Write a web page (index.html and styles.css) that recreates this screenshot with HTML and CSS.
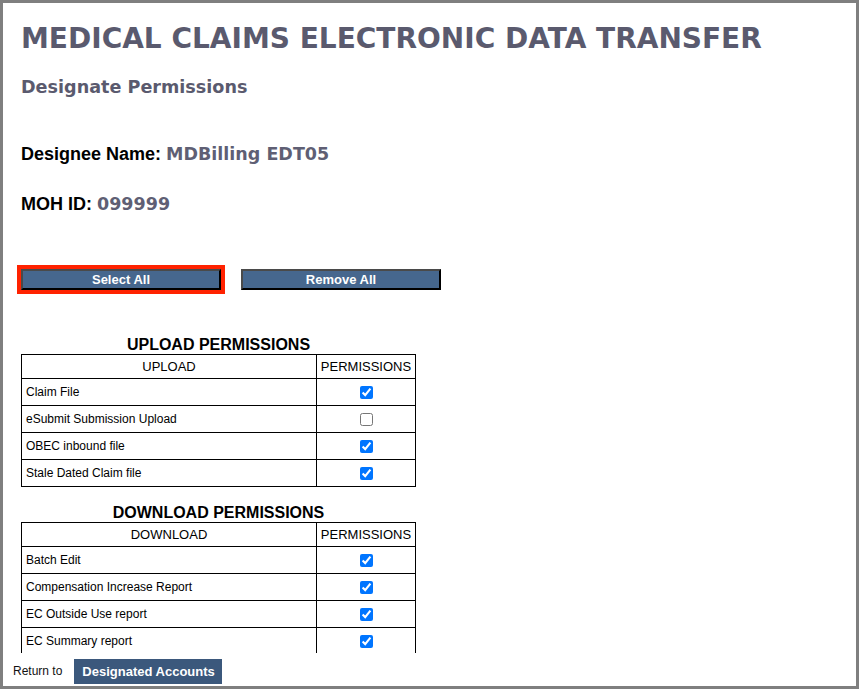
FILE: index.html
```html
<!DOCTYPE html>
<html lang="en">
<head>
    <meta charset="UTF-8">
    <title>Designate Permissions</title>
    <link rel="stylesheet" href="styles.css">
</head>
<body>
    <div class="window">
        <div class="content">
            <h1>MEDICAL CLAIMS ELECTRONIC DATA TRANSFER</h1>
            <h2>Designate Permissions</h2>

            <p class="info">Designee Name: <span class="value">MDBilling EDT05</span></p>
            <p class="info moh">MOH ID: <span class="value">099999</span></p>

            <div class="actions">
                <button class="action-btn focused">Select All</button>
                <button class="action-btn">Remove All</button>
            </div>

            <!-- Upload -->
            <table class="perm-table">
                <caption>UPLOAD PERMISSIONS</caption>
                <tr class="head"><th>UPLOAD</th><th class="perm-col">PERMISSIONS</th></tr>
                <tr><td>Claim File</td><td class="check"><input type="checkbox" checked></td></tr>
                <tr><td>eSubmit Submission Upload</td><td class="check"><input type="checkbox"></td></tr>
                <tr><td>OBEC inbound file</td><td class="check"><input type="checkbox" checked></td></tr>
                <tr><td>Stale Dated Claim file</td><td class="check"><input type="checkbox" checked></td></tr>
            </table>

            <!-- Download -->
            <table class="perm-table download">
                <caption>DOWNLOAD PERMISSIONS</caption>
                <tr class="head"><th>DOWNLOAD</th><th class="perm-col">PERMISSIONS</th></tr>
                <tr><td>Batch Edit</td><td class="check"><input type="checkbox" checked></td></tr>
                <tr><td>Compensation Increase Report</td><td class="check"><input type="checkbox" checked></td></tr>
                <tr><td>EC Outside Use report</td><td class="check"><input type="checkbox" checked></td></tr>
                <tr><td>EC Summary report</td><td class="check"><input type="checkbox" checked></td></tr>
            </table>
        </div>

        <div class="footer">
            <span class="return-label">Return to</span>
            <a class="return-btn" href="#">Designated Accounts</a>
        </div>
    </div>
</body>
</html>
```

FILE: styles.css
```css
/* General Reset */
* {
    margin: 0;
    padding: 0;
    box-sizing: border-box;
}

body {
    font-family: "Liberation Sans", Arial, sans-serif;
    background: #ffffff;
    color: #000;
}

/* Window frame */
.window {
    height: 689px;
    border: 3px solid #7f7f7f;
    display: flex;
    flex-direction: column;
}

.content {
    height: 650px;
    overflow: hidden;
    padding-left: 18px;
}

/* Headings */
h1 {
    font-family: "DejaVu Sans", Verdana, sans-serif;
    font-size: 28px;
    line-height: 34px;
    color: #5a5a6e;
    margin-top: 19px;
    white-space: nowrap;
}

h2 {
    font-family: "DejaVu Sans", Verdana, sans-serif;
    font-size: 17.6px;
    line-height: 22px;
    color: #5a5a6e;
    margin-top: 20px;
}

/* Designee info */
.info {
    font-size: 18px;
    font-weight: bold;
    line-height: 22px;
    margin-top: 45px;
}

.info.moh {
    margin-top: 28px;
}

.value {
    font-family: "DejaVu Sans", Verdana, sans-serif;
    font-size: 17.5px;
    color: #5f5f74;
}

/* Select / Remove buttons */
.actions {
    display: flex;
    gap: 20px;
    margin-top: 54px;
}

.action-btn {
    width: 200px;
    height: 21px;
    background: #46678e;
    color: #fff;
    font-family: "Liberation Sans", Arial, sans-serif;
    font-size: 13px;
    font-weight: bold;
    border: 2px solid;
    border-color: #4a4a4a #000 #000 #4a4a4a;
    cursor: pointer;
}

.action-btn.focused {
    outline: 4px solid #ff2200;
    outline-offset: 0;
}

/* Permission tables */
.perm-table {
    border-collapse: collapse;
    width: 395px;
    margin-top: 45px;
}

.perm-table.download {
    margin-top: 16px;
}

.perm-table caption {
    font-size: 16px;
    font-weight: bold;
    line-height: 19px;
    text-align: center;
}

.perm-table th,
.perm-table td {
    border: 1px solid #000;
}

.perm-table th {
    font-size: 13px;
    font-weight: normal;
    height: 24px;
}

.perm-table .perm-col {
    width: 99px;
}

.perm-table td {
    font-size: 12px;
    height: 27px;
    padding-left: 4px;
}

.perm-table td.check {
    text-align: center;
    padding-left: 0;
}

.check input {
    width: 13px;
    height: 13px;
    vertical-align: middle;
}

/* Footer */
.footer {
    flex: 1;
    display: flex;
    align-items: flex-start;
    padding: 6px 0 0 10px;
    gap: 12px;
}

.return-label {
    font-size: 12px;
    line-height: 25px;
    color: #111;
}

.return-btn {
    display: inline-block;
    background: #3b587c;
    color: #fff;
    font-size: 13px;
    font-weight: bold;
    line-height: 25px;
    padding: 0 7px 0 8px;
    text-decoration: none;
}
```
